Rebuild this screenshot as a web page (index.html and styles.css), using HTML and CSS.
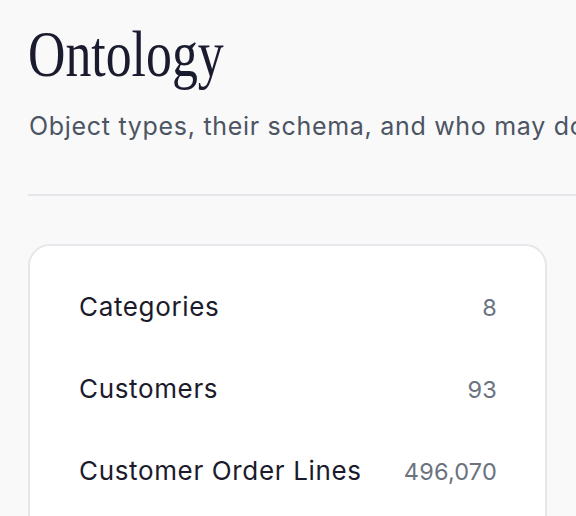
FILE: index.html
```html
<!DOCTYPE html>
<html lang="en">
<head>
<meta charset="utf-8">
<title>Ontology</title>
<link rel="stylesheet" href="styles.css">
</head>
<body>
<main class="page">
  <header class="page-header">
    <h1 class="title"><span class="title-text">Ontology</span></h1>
    <p class="subtitle">Object types, their schema, and who may do what with them.</p>
  </header>
  <hr class="divider">
  <section class="card">
    <ul class="type-list">
      <li class="type-row"><span class="type-name">Categories</span><span class="type-count">8</span></li>
      <li class="type-row"><span class="type-name">Customers</span><span class="type-count">93</span></li>
      <li class="type-row"><span class="type-name">Customer Order Lines</span><span class="type-count">496,070</span></li>
      <li class="type-row"><span class="type-name">Customer Orders</span><span class="type-count">73,595</span></li>
    </ul>
  </section>
</main>
</body>
</html>
```

FILE: styles.css
```css
html, body {
  margin: 0;
  padding: 0;
  background: #f9f9f9;
  overflow: hidden;
}

.page {
  width: 1000px;
  padding: 21px 0 0 28px;
  font-family: Inter, "Noto Sans", sans-serif;
  color: #1b1b2b;
}

.page-header {
  display: flex;
  flex-direction: column;
}

.title {
  margin: 0;
  font-family: "Liberation Serif", serif;
  font-weight: 400;
  font-size: 66px;
  line-height: 66px;
  height: 66px;
  color: #1a1b2e;
}

.title-text {
  display: inline-block;
  transform: scaleX(0.785);
  transform-origin: 0 50%;
}

.subtitle {
  margin: 23px 0 0 1px;
  font-size: 25px;
  letter-spacing: 0.7px;
  line-height: 32px;
  color: #4b5563;
  white-space: nowrap;
}

.divider {
  margin: 52px 0 0 0;
  border: 0;
  height: 2px;
  background: #e5e5ea;
}

.card {
  margin-top: 48px;
  width: 519px;
  box-sizing: border-box;
  background: #ffffff;
  border: 2px solid #e6e6eb;
  border-radius: 22px;
  padding: 20px 48px 0 49px;
}

.type-list {
  list-style: none;
  margin: 0;
  padding: 0;
}

.type-row {
  display: flex;
  justify-content: space-between;
  align-items: baseline;
  padding: 25px 0;
  height: 32px;
  font-size: 26px;
  letter-spacing: 0.65px;
  line-height: 32px;
}

.type-name {
  color: #1b1b2b;
}

.type-count {
  font-size: 23.5px;
  letter-spacing: 0.2px;
  color: #6b7280;
}
```
